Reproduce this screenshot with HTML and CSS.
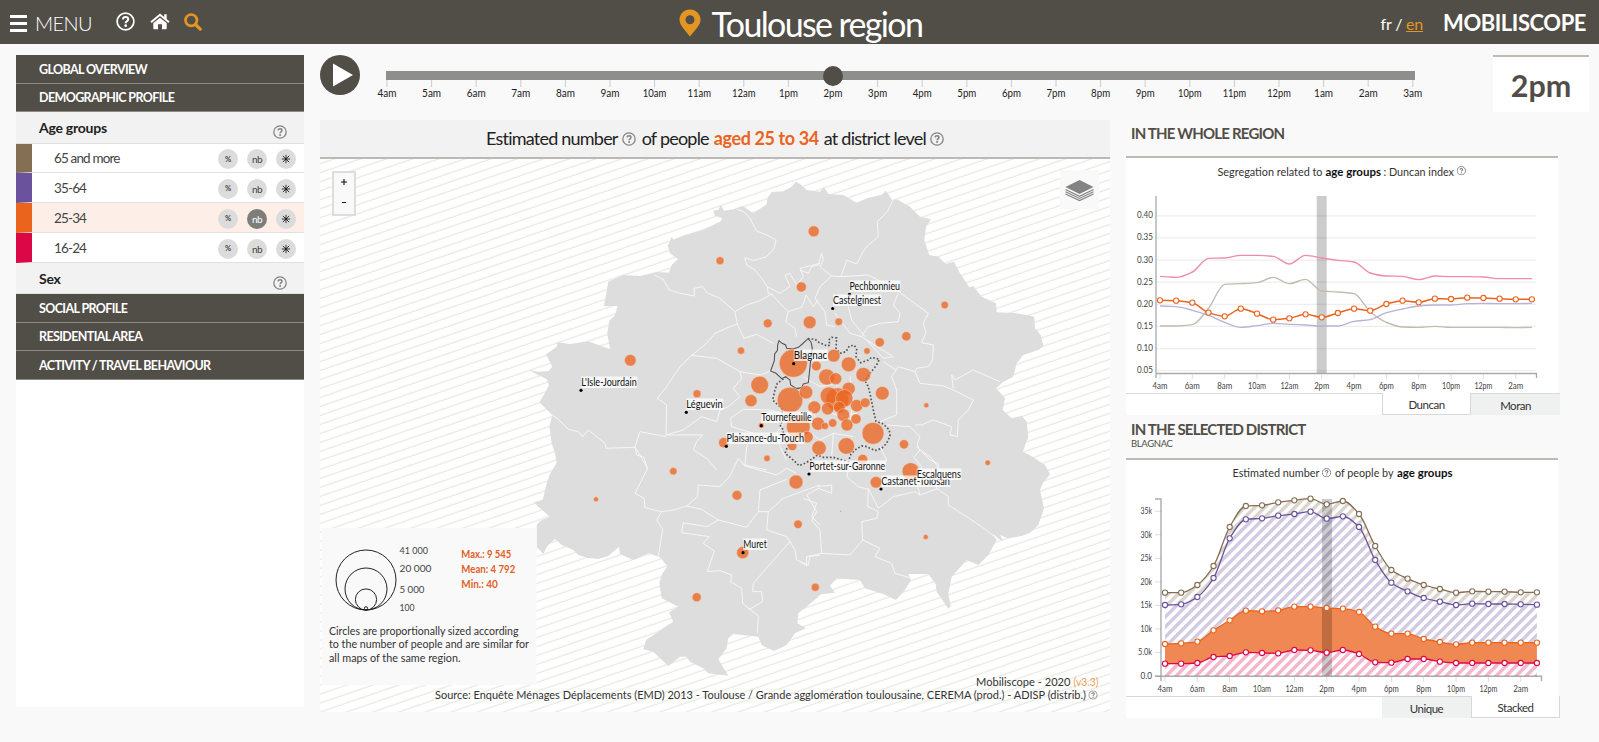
FILE: index.html
```html
<!DOCTYPE html>
<html lang="en">
<head>
<meta charset="utf-8">
<title>Mobiliscope - Toulouse region</title>
<link rel="stylesheet" href="styles.css">
</head>
<body>
<svg class="defs" width="0" height="0" aria-hidden="true">
  <symbol id="help" viewBox="0 0 24 24"><circle cx="12" cy="12" r="10.6" fill="none" stroke="currentColor" stroke-width="2.2"/><path d="M8.7 9.3c.2-2 1.600-3 3.400-3 2 0 3.300 1.200 3.300 2.900 0 2.500-3.200 2.500-3.200 5" fill="none" stroke="currentColor" stroke-width="2.700"/><circle cx="12.200" cy="17.300" r="1.700" fill="currentColor"/></symbol>
  <symbol id="star" viewBox="0 0 12 12"><path d="M6 1v10M1 6h10M2.200 2.200l7.600 7.600M9.800 2.200L2.200 9.800" stroke="currentColor" stroke-width="1"/></symbol>
</svg>

<header class="topbar">
  <div class="top-left">
    <span class="burger"><i></i><i></i><i></i></span>
    <span class="menu">MENU</span>
    <svg class="ic-help"><use href="#help"/></svg>
    <svg class="ic-home" viewBox="0 0 20 17"><path d="M10 4.700L3.300 10v5.500q0 .8.800.8H8v-5h4v5h3.900q.8 0 .8-.8V10z" fill="#fff"/><path d="M1 9.200L10 1.800l9 7.400" fill="none" stroke="#fff" stroke-width="2"/><path d="M14.200 1.300h2.500v5l-2.500-2z" fill="#fff"/></svg>
    <svg class="ic-search" viewBox="0 0 18 18"><circle cx="7.200" cy="7.200" r="5.700" fill="none" stroke="#e39624" stroke-width="2.700"/><path d="M11.500 11.500l4.700 4.700" stroke="#e39624" stroke-width="3.200" stroke-linecap="round"/></svg>
  </div>
  <h1 class="city"><svg class="ic-pin" viewBox="0 0 22 28"><path d="M11 .500C5 .500.500 5 .500 10.700.500 16 5.500 20.500 11 27.500 16.500 20.500 21.500 16 21.500 10.700 21.500 5 17 .500 11 .500zm0 5.700a4.500 4.500 0 1 1 0 9 4.500 4.500 0 0 1 0-9z" fill="#e39624" fill-rule="evenodd"/></svg><span>Toulouse region</span></h1>
  <div class="top-right"><span class="lang">fr / <a>en</a></span><span class="brand">MOBILISCOPE</span></div>
</header>

<main class="page">
  <nav class="sidebar">
    <div class="sec h29">GLOBAL OVERVIEW</div>
    <div class="sec h28">DEMOGRAPHIC PROFILE</div>
    <div class="group">Age groups<svg><use href="#help"/></svg></div>
    <div class="opt o1"><span class="name">65 and more</span><span class="b">%</span><span class="b nb">nb</span><span class="b"><svg><use href="#star"/></svg></span></div>
    <div class="opt o2"><span class="name">35-64</span><span class="b">%</span><span class="b nb">nb</span><span class="b"><svg><use href="#star"/></svg></span></div>
    <div class="opt o3"><span class="name">25-34</span><span class="b">%</span><span class="b nb on">nb</span><span class="b"><svg><use href="#star"/></svg></span></div>
    <div class="opt o4"><span class="name">16-24</span><span class="b">%</span><span class="b nb">nb</span><span class="b"><svg><use href="#star"/></svg></span></div>
    <div class="group sex">Sex<svg><use href="#help"/></svg></div>
    <div class="sec h29">SOCIAL PROFILE</div>
    <div class="sec h28">RESIDENTIAL AREA</div>
    <div class="sec h29">ACTIVITY / TRAVEL BEHAVIOUR</div>
  </nav>

  <div class="content">
    <div class="timebar">
      <svg class="play" viewBox="0 0 40 40"><circle cx="20" cy="20" r="20" fill="#514e47"/><path d="M13 8.500L33 20 13 31.500z" fill="#fff"/></svg>
      <svg class="slider" id="slider" width="1060" height="60" viewBox="370 55 1060 60"></svg>
      <div class="clock">2pm</div>
    </div>
    <div class="cols">
      <section class="mapcol">
        <h2 class="maptitle"><span class="t1">Estimated number</span><svg><use href="#help"/></svg><span class="t2">of people</span><b>aged 25 to 34</b><span class="t3">at district level</span><svg><use href="#help"/></svg></h2>
        <svg class="map" id="map" width="790" height="553" viewBox="320 159 790 553"></svg>
      </section>
      <aside class="side">
        <h3 class="head first">IN THE WHOLE REGION</h3>
        <div class="card">
          <svg id="duncan" width="432" height="235" viewBox="1126 158 432 235"></svg>
          <div class="tabs"><span class="tab active">Duncan</span><span class="tab">Moran</span></div>
        </div>
        <h3 class="head second">IN THE SELECTED DISTRICT<small>BLAGNAC</small></h3>
        <div class="card">
          <svg id="stack" width="432" height="236" viewBox="1126 460 432 236"></svg>
          <div class="tabs low"><span class="tab">Unique</span><span class="tab active">Stacked</span></div>
        </div>
      </aside>
    </div>
  </div>
</main>
<script src="charts.js"></script>
</body>
</html>
```
FILE: styles.css
```css
* { box-sizing: border-box; }
body { margin: 0; height: 742px; overflow: hidden; background: #f9f9f9; font-family: Lato, "Open Sans", sans-serif; font-weight: 400; color: #222; }
.defs { position: absolute; }
svg { display: block; flex: none; }
h1, h2, h3 { margin: 0; font-weight: 400; }

.topbar { height: 44px; background: #514e47; color: #fff; display: grid; grid-template-columns: 1fr auto 1fr; }
.top-left { display: flex; align-items: flex-start; padding-left: 10px; }
.burger { width: 17px; padding-top: 15px; display: grid; gap: 4px; }
.burger i { height: 3px; background: #fff; }
.menu { width: 60px; margin-left: 8px; font-size: 20px; line-height: 24px; padding-top: 11px; font-weight: 300; letter-spacing: -.6px; }
.ic-help { width: 19px; height: 19px; margin: 12px 0 0 21px; }
.ic-home { width: 20px; height: 17px; margin: 13px 0 0 15px; }
.ic-search { width: 18px; height: 18px; margin: 13px 0 0 14px; }
.city { display: flex; align-items: flex-start; font-size: 34px; line-height: 40px; }
.city span { padding-top: 4px; width: 209px; white-space: nowrap; letter-spacing: -1.65px; }
.ic-pin { width: 22px; height: 28px; margin: 9px 11px 0 0; }
.top-right { display: flex; justify-content: flex-end; padding-right: 13px; }
.lang { font-size: 16px; line-height: 20px; padding-top: 14px; margin-right: 20px; letter-spacing: -.2px; }
.lang a { color: #e39624; text-decoration: underline; }
.brand { font-size: 22px; font-weight: 700; line-height: 26px; padding-top: 10px; letter-spacing: -.45px; }

.page { display: flex; gap: 16px; padding: 11px 0 0 16px; }
.sidebar { width: 288px; height: 652px; background: #fff; }
.sec { background: #514e47; color: #fff; font-size: 12.500px; font-weight: 700; letter-spacing: -.62px; padding-left: 23px; line-height: 27px; border-bottom: 1px solid #8b8b8a; }
.h29 { height: 29px; line-height: 29px; }
.h28 { height: 28px; }
.group { height: 32px; background: #f2f2f2; border-bottom: 1px solid #e0e0e0; display: flex; justify-content: space-between; font-size: 14px; font-weight: 700; line-height: 32px; padding: 0 17px 0 23px; letter-spacing: -.25px; }
.group svg { width: 14px; height: 14px; margin-top: 13px; color: #848484; }
.group.sex { height: 31px; }
.opt { height: 30px; display: flex; align-items: center; gap: 9px; padding-right: 8px; background: #fff; border-bottom: 1px solid #e0e0e0; border-left: 16px solid #846e54; font-size: 13.500px; }
.opt.o1 { height: 29px; }
.opt.o2 { border-left-color: #6a539c; }
.opt.o3 { border-left-color: #ea641e; background: #fdeee8; }
.opt.o4 { border-left-color: #dc0747; }
.name { flex: 1; padding-left: 22px; letter-spacing: -.85px; color: #444; }
.b { width: 20px; height: 20px; border-radius: 50%; background: #dcdcdc; display: flex; align-items: center; justify-content: center; font-size: 7.500px; font-weight: 700; color: #444; margin-top: 2px; }
.b.nb { font-size: 10px; font-weight: 400; letter-spacing: -.6px; }
.b.on { background: #7d7d7b; color: #fff; }
.b svg { width: 10px; height: 10px; color: #111; }

.content { width: 1279px; }
.timebar { height: 65px; display: flex; }
.play { width: 40px; height: 40px; }
.slider { margin: 0 63px 0 10px; }
.clock { width: 96px; height: 57px; background: #fff; border-top: 2px solid #c0bab5; color: #514e47; font-size: 30.500px; font-weight: 700; text-align: center; line-height: 57px; }
.cols { display: flex; gap: 16px; }
.mapcol { width: 790px; }
.maptitle { height: 39px; background: #f2f2f2; border-bottom: 2px solid #bdb8b3; display: flex; justify-content: center; font-size: 18px; line-height: 37px; white-space: nowrap; letter-spacing: -.78px; }
.maptitle svg { width: 14px; height: 14px; margin: 12px 0 0 4px; color: #848484; }
.maptitle .t2 { margin-left: 6px; }
.maptitle b { color: #ea641e; font-weight: 700; margin: 0 5px; letter-spacing: -.4px; }
.map { background: #fff; overflow: visible; }
.side { width: 434px; }
.head { color: #514e47; font-size: 15px; font-weight: 700; letter-spacing: -.8px; padding-left: 5px; white-space: nowrap; }
.head.first { height: 36px; line-height: 27px; }
.head.second { height: 43px; line-height: 28px; }
.head small { display: block; font-size: 9.500px; font-weight: 400; line-height: 10px; margin-top: -4px; letter-spacing: -.35px; }
.card { width: 432px; background: #fff; border-top: 2px solid #c0bab5; }
.tabs { height: 22px; width: 434px; display: flex; justify-content: flex-end; border-top: 1px solid #d8d8d8; background: linear-gradient(90deg, #fff 432px, transparent 432px); }
.tab { width: 89px; height: 21px; background: #eff1f1; font-size: 11.500px; line-height: 24px; text-align: center; color: #333; letter-spacing: -.5px; }
.tab.active { background: #fff; border: 1px solid #d8d8d8; border-top: 0; margin-top: -1px; height: 22px; }

svg text { font-family: Lato, sans-serif; }
.tick { font-size: 10.500px; fill: #222; text-anchor: middle; }
.axt { font-size: 8.500px; fill: #444; }
.mid { text-anchor: middle; }
.end { text-anchor: end; }
.ctitle { font-size: 11.500px; fill: #333; }
.strong { font-weight: 700; fill: #111; }
.lab { font-size: 10.500px; fill: #111; }
.bub { fill: #ea641e; fill-opacity: .77; stroke: #f5d5c5; stroke-width: .5; }
.bound { fill: none; stroke: #f6f6f6; stroke-width: 3; stroke-linejoin: round; }
.note { font-size: 11.500px; fill: #333; }
.leg { font-size: 9.500px; fill: #444; }
.stat { font-size: 12px; font-weight: 700; fill: #e2601f; }
```
FILE: charts.js
```js
const el = id => document.getElementById(id);
const txt = (x, y, s, w, cls) => `<text x="${x}" y="${y}" class="${cls}"${w ? ` textLength="${w}" lengthAdjust="spacingAndGlyphs"` : ''}>${s}</text>`;
const help = (cx, cy, s) => `<svg x="${cx - s / 2}" y="${cy - s / 2}" width="${s}" height="${s}" color="#777"><use href="#help"/></svg>`;
const hours = ['4am','5am','6am','7am','8am','9am','10am','11am','12am','1pm','2pm','3pm','4pm','5pm','6pm','7pm','8pm','9pm','10pm','11pm','12pm','1am','2am','3am'];

/* time slider */
let s = '<rect x="386" y="71" width="1029" height="9" fill="#8e8e8c"/>';
hours.forEach((h, i) => {
  const x = 387 + i * 44.6;
  s += `<path d="M${x.toFixed(1)} 80v7" stroke="#ccc"/>` + txt(x.toFixed(1), 97, h, h.length > 3 ? 23.5 : 19, 'tick');
});
s += '<circle cx="833" cy="76" r="10" fill="#514e47"/>';
el('slider').innerHTML = s;

/* smooth line through points, flat at local extrema */
function curve(p) {
  const n = p.length, m = [];
  const d = i => (p[i + 1][1] - p[i][1]) / (p[i + 1][0] - p[i][0]);
  for (let i = 0; i < n; i++) {
    if (i === 0) m.push(0);
    else if (i === n - 1) m.push(0);
    else { const a = d(i - 1), b = d(i); m.push(a * b <= 0 ? 0 : 2 * a * b / (a + b)); }
  }
  let out = `${p[0][0]} ${p[0][1]}`;
  for (let i = 0; i < n - 1; i++) {
    const h = (p[i + 1][0] - p[i][0]) / 3;
    out += `C${(p[i][0] + h).toFixed(2)} ${(p[i][1] + m[i] * h).toFixed(2)} ${(p[i + 1][0] - h).toFixed(2)} ${(p[i + 1][1] - m[i + 1] * h).toFixed(2)} ${p[i + 1][0]} ${p[i + 1][1]}`;
  }
  return out;
}
const pts = (x0, y0, a) => a.map((v, i) => [+(x0 + i * 16.17).toFixed(2), +(y0 + v / 3).toFixed(2)]);
const dots = (p, c) => p.map(q => `<circle cx="${q[0]}" cy="${q[1]}" r="2.6" fill="#fff" stroke="${c}" stroke-width="1.1"/>`).join('');
const xlabels = (x0, y, ty) => hours.filter((h, i) => i % 2 === 0).map((h, i) => {
  const x = (x0 + i * 32.34).toFixed(1);
  return `<path d="M${x} ${ty}v5" stroke="#ddd"/>` + txt(x, y, h, h.length > 3 ? 18 : 15, 'axt mid');
}).join('');

/* segregation chart */
let c = txt(1217.5, 175.5, 'Segregation related to', 105, 'ctitle') + txt(1325.5, 175.5, 'age groups', 55.500, 'ctitle strong') + txt(1383.5, 175.5, ': Duncan index', 70.500, 'ctitle') + help(1461.300, 170.700, 9.5);
['0.40','0.35','0.30','0.25','0.20','0.15','0.10','0.05'].forEach((v, i) => {
  const y = (215.800 + i * 22.130).toFixed(1);
  c += `<path d="M1156 ${y}H1536" stroke="#eee" stroke-width="1.300"/>` + txt(1153, +y + 2.500, v, 16, 'axt end');
});
c += '<path d="M1156 196V378M1155.500 373.500H1536.500V378" fill="none" stroke="#aaa" stroke-width="1.300"/>' + xlabels(1160, 388.500, 374);
c += '<rect x="1316.700" y="196" width="10" height="177" fill="#000" fill-opacity=".2"/>';
[['#f08bae', [499,502,486,445,444,436,436,439,462,436,444,451,456,489,498,499,509,498,500,500,501,506,506,506]],
 ['#c3bbae', [648,648,644,595,523,521,518,502,521,508,543,546,551,605,637,651,652,649,652,652,652,652,653,652]],
 ['#bbb2d8', [588,590,601,616,637,652,647,640,643,645,648,648,634,629,608,597,588,585,585,581,580,581,581,580]]
].forEach(r => { c += `<path d="M${curve(pts(1160, 110, r[1]))}" fill="none" stroke="${r[0]}" stroke-width="1.400"/>`; });
const main = pts(1160, 110, [571,572,578,608,619,596,611,629,625,613,622,609,596,602,582,572,577,566,567,563,564,566,568,568]);
c += `<path d="M${curve(main)}" fill="none" stroke="#ea641e" stroke-width="1.500"/>` + dots(main, '#ea641e');
el('duncan').innerHTML = c;

/* stacked chart */
const hatch = (id, col) => `<pattern id="${id}" width="7.07" height="7.07" patternUnits="userSpaceOnUse" patternTransform="rotate(45)"><rect width="3.4" height="7.07" fill="${col}"/></pattern>`;
let k = '<defs>' + hatch('hp', '#d1cae2') + hatch('hb', '#dad4cd') + hatch('hr', '#f5b5ca') + '</defs>';
k += txt(1232.500, 477, 'Estimated number', 87, 'ctitle') + help(1326.500, 472.700, 9.5) + txt(1335, 477, 'of people by', 58.500, 'ctitle') + txt(1397, 477, 'age groups', 55.500, 'ctitle strong');
['0.0','5.0k','10k','15k','20k','25k','30k','35k'].forEach((v, i) => {
  const y = 676 - i * 23.530;
  k += `<path d="M1155 ${y.toFixed(1)}h6" stroke="#ddd"/>` + txt(1152, (y + 2.700).toFixed(1), v, v.length > 3 ? 14 : 11.500, 'axt end');
});
const top4 = pts(1165, 410, [548,548,525,468,351,288,286,277,271,266,283,273,312,408,480,506,525,537,548,544,545,545,547,547]);
const top3 = pts(1165, 410, [585,583,561,504,385,328,325,317,312,305,326,319,351,450,518,544,564,575,585,581,582,582,583,584]);
const top2 = pts(1165, 410, [702,700,695,661,631,602,604,601,590,590,594,596,606,650,671,671,687,696,703,698,698,698,698,698]);
const top1 = pts(1165, 410, [761,761,759,741,738,727,729,730,720,721,728,720,732,757,758,747,747,755,759,759,759,759,759,759]);
const base = pts(1165, 410, Array(24).fill(798));
const area = (a, b, f, o) => `<path d="M${curve(a)}L${curve([...b].reverse())}Z" fill="${f}" fill-opacity="${o || 1}"/>`;
k += area(top4, top3, 'url(#hb)') + area(top3, top2, 'url(#hp)') + area(top2, top1, '#ea641e', .77) + area(top1, base, 'url(#hr)');
k += '<rect x="1322" y="499" width="10" height="177" fill="#000" fill-opacity=".2"/>';
[[top4, '#846e54'], [top3, '#6a539c'], [top2, '#ea641e'], [top1, '#dc0747']].forEach(r => { k += `<path d="M${curve(r[0])}" fill="none" stroke="${r[1]}" stroke-width="1.300"/>` + dots(r[0], r[1]); });
k += '<path d="M1155 499H1161V681M1155 676.300H1541.500V681" fill="none" stroke="#888" stroke-opacity=".7" stroke-width="1.400"/>' + xlabels(1165, 691.500, 677);
el('stack').innerHTML = k;

/* map */
const region = '795.7,181.7 791.7,186.7 783.3,191.3 771.7,192 767.3,198.3 766.7,204.3 760.7,208.3 753.3,213.3 742.7,206 733.3,209.3 724,210.7 720.7,205 718.3,210 713.3,210.7 715,215.7 722.3,218.3 720,222 716.7,223.3 703.3,230 685,235 673.3,240 671.7,236.7 667.7,246 670,253.3 678,259 671.7,265 669,272.7 656.7,272 640,276 623.3,275 608.3,281.7 604,306 617.7,306 615,315 609.3,320.7 607.3,333.3 610,349 598.3,345 588.3,341.3 570,344 557.3,342.3 556.7,346.7 546,354.3 552.3,366.7 548.3,371 538.3,371.7 528.3,370 546.7,379.3 549,385 545,393 539.3,402.3 552.3,415 549.3,426.7 551.7,443.3 555,453.3 556.7,463 550,474 546.7,483.3 542.7,500 534,502.3 540,508.3 550,516.7 540,521 536.7,525 536.7,546.7 543.3,554 547.3,546 555,539 561.7,545 573.3,550 578.3,555 588,558 598.3,559 608.3,556 619,546.7 620,554 633.3,560 648.3,553.3 660,557.3 667.3,566 661.7,575 659.3,583.3 661.7,598.3 678.3,606.7 669,612.3 673.3,621.7 666.7,625.7 655,634 646,640 643.3,649.3 653.3,651.7 668.3,666 680,656.7 686.7,656.7 690,661.7 703.3,668.3 708.3,673.3 728.3,675.7 718.3,659.3 726.7,648.3 728.3,638.3 733.3,634 758.3,636.7 761.7,645 774,651 786.7,645 795,633.3 806,628.3 797.3,623.3 798.3,613.3 803.3,609.3 816.7,598.3 820.7,594.3 835,592.7 830,585.7 836.7,578.3 860,580 865,588.3 883.3,594 896,600 905,590 911,580 908.3,574 928.3,574 935.7,584 936.7,591.7 948.3,608.7 950.7,606 948.3,593.3 951.7,576.7 966.7,560 978.3,565 988.3,555 996.7,540 992,533 1000,540 1002.7,540 1000,535 1008.3,538.3 1021.7,536 1030,532.7 1038.3,525 1044,508.3 1040,490 1042.7,483.3 1050,474.3 1045,465 1028.3,454.3 1022.7,451.7 1028.3,436.7 1026.7,421.7 1021.7,416 1011.7,418.3 1002.7,410 1005,398.3 996,388.3 1003.3,381.7 1013.3,376.7 1016.7,363.3 1023.3,355 1038.3,350 1043.3,346 1040.7,335 1035,328.3 1034.3,316.7 1016.7,313.3 996.7,312.3 996,303.3 981.7,296.7 973.3,286 969.3,287.3 960,273.3 954,261.7 945.7,264 938.3,256.7 929.3,255 924.3,240 926,226.7 931,219.3 920,216.7 910,206.7 896.7,199.3 892.7,200.7 886,190.7 881.7,195 868.3,197.7 856.7,202.7 843.3,195 828.3,194 824,187.3 820,191.7 806.7,190 800,184';
const bounds = [
  [520, 170, 'M650 118L672 125 690 145 710 183 740 195 768 210 762 235 740 260 700 272 675 263 680 285 705 300 725 325 742 350 745 370 755 372 720 392 680 405 645 425 600 385 560 368 548 350 522 355 523 378 480 370 448 360 430 328 403 315M645 425L652 462 630 470 585 490 560 520 515 556 480 590 440 650 412 685 440 705 438 795M438 795L548 795 530 815 520 840 560 865 590 900M515 556L590 565 660 605 720 615 760 600M755 372L780 400 805 425 845 412 852 395 858 375 880 410 895 390M742 350L780 370 810 350 795 315 810 310 830 345 850 320 840 295 900 280M805 425L797 455 825 475 830 500M652 462L672 505 710 493 760 520M97 735L115 748 145 778 175 785 188 800 205 780 255 820 258 835 345 832 360 785 438 800M345 832L350 855 372 862 383 900M438 795L490 780 545 740 590 755 600 720 625 710 660 680 640 655 665 625 660 605M670 718L750 720 790 735M670 718L632 745 635 770 700 790 680 830 675 885 740 900M790 760L770 790 780 830 800 870'],
  [520, 440, 'M345 20L383 85 345 160 372 175 375 203 425 215 460 210 500 198 533 170 535 135 600 140 630 108 655 55 675 78 770 105 800 85 830 100M500 198L545 208 595 240 560 260 490 248 485 278 568 290 550 310 583 333 562 395 600 392 635 405 632 425 665 445 668 490 715 528 712 580M425 215L410 240 428 268 415 350M595 240L680 262 715 215 720 150 800 118M715 215L745 215 740 270 800 290 810 305 770 350 700 430 698 455 725 455 728 485 685 510M810 305L825 330 830 360 865 375 870 350 900 345M745 215L790 175 900 135M850 175L890 190 875 230 900 255'],
  [800, 170, 'M278 92L262 125 232 155 235 200 195 235 170 282 140 270 123 320 95 318 60 350 45 385 75 425 80 465 105 470M0 300L25 310 35 290 55 285 65 250 70 270 60 290 95 318M123 320L205 315 225 325 290 360 330 390 385 430 370 460 378 488 365 518 400 525 398 570 385 590 350 595 345 605M295 370L280 405 300 430 295 455 240 460 205 470 185 500 150 490 105 430M185 500L230 530 280 560 250 565 200 510M250 575L288 600 295 590 345 605 360 640 430 648 460 660 520 690 505 720 475 750 472 800 450 795 455 770 400 750 365 765 345 765M288 600L275 620 290 660 290 735 240 755M455 615L465 630 520 600 600 635M455 615L460 655M260 765L330 770 360 800 352 820 355 835 395 865 420 900M145 410L155 450 195 500M10 620L60 650 110 640M0 740L50 710 120 740 170 730M20 780L60 810 100 790 160 800M100 790L95 860M30 690L50 760M110 640L115 740M150 620L160 700 145 780M240 830L260 870 240 900'],
  [800, 440, 'M350 20L360 30 342 52 365 80 350 130 360 165M365 35L390 60 415 70 410 145 445 170 445 195 500 230 545 260 590 295M205 145L235 205 280 170 345 155 360 165 415 145M150 70L140 110 175 140 205 148 203 200 235 215 230 235 185 245 188 300 240 325 225 350 275 370 285 400 335 415M188 300L150 345 65 340 60 270 35 240 50 215 20 165 55 145 95 160 95 135 55 140M65 340L20 350 20 378 0 365'],
];
const bubbles = [[793.3,363.3,14],[790,400,12.8],[798.3,426.7,11.8],[837.3,399.3,11.5],[873,433.3,10.9],[813.7,231.3,5.5],[720,260.7,4],[801.3,287,5],[767.7,323.3,4.4],[741,350.7,3.6],[630.3,360.3,5.8],[697,393.7,4],[809.7,322.3,6.4],[759.7,385,8.8],[751,400.7,6.1],[761.3,425.5,2.8],[723.7,442.7,5.1],[792.3,446,4.6],[807.3,437,5.8],[767,458.3,3.2],[838.7,321.7,3.8],[944.7,305,3.7],[906.3,336.3,4.6],[879.7,342.3,4.6],[867,351,3.2],[833.7,355.7,6.4],[848.7,364.3,7.4],[816.3,366,4.8],[863.3,374.7,7.3],[826.7,377,8],[835.7,378.7,6],[848.7,388.7,6.5],[882.3,393.3,6.8],[806,392.3,6.7],[829,395.7,8.8],[844.3,398.3,8.7],[814.3,407.3,6.4],[827.7,408.7,6.2],[839.3,407.3,5.8],[856.7,405.7,6.2],[865.3,402.7,4.8],[843.3,415,6.3],[856,419,5.1],[847,425,6],[818,423.7,6.5],[825,426,3.5],[832.7,423,4.2],[846.3,446,8.2],[819,448,7.2],[904,444.3,4.6],[926.3,405.3,2.5],[987.7,462.7,2.7],[862.7,459.3,4.9],[910.7,471.3,8.6],[876,482.3,5.8],[925.7,537,2.5],[815.3,587.3,4],[840.7,511.3,.8],[796,482,7],[737,495.3,4.9],[673.3,471.3,3.7],[596,499.3,2.5],[798,524.3,4.2],[742.7,552.7,6.1],[696.7,597.3,4.5]];
const towns = [["L'Isle-Jourdain",581.3,386,56,581,390.3],['Léguevin',686.3,408,37,686.3,412.3],['Tournefeuille',761.3,421,51,761.3,425.7],['Plaisance-du-Touch',726.5,442,78,726.3,446.3],['Pechbonnieu',849.5,290,51,849.5,294.3],['Castelginest',833,304,48.5,832.7,308.5],['Blagnac',793.8,359,34,793.7,363.7],['Portet-sur-Garonne',809.3,470,76.5,809,474],['Castanet-Tolosan',881.3,485,69,881,489],['Escalquens',916.7,478,44.7],['Muret',743.3,548,24,743,552.7]];

let m = '<defs><pattern id="hatch" width="20" height="8.5" patternUnits="userSpaceOnUse" patternTransform="rotate(-19)"><path d="M0 4H20" stroke="#e3e2d8" stroke-width="1"/></pattern></defs><rect x="320" y="159" width="790" height="553" fill="url(#hatch)"/>';
m += `<polygon points="${region}" fill="#ddd"/>`;
bounds.forEach(b => { m += `<path class="bound" transform="translate(${b[0]} ${b[1]}) scale(.3333)" d="${b[2]}"/>`; });
m += '<g transform="translate(740 320) scale(.3333)" fill="none" stroke="#555"><path stroke-width="5" stroke-dasharray="5 6" d="M204 56L225 58 238 68 262 78 270 75 266 60 275 52 290 54 288 85 300 100 318 95 328 78 343 76 350 88 348 110 362 128 385 120 395 112 418 118 410 135 390 160 375 182 385 200 392 230 402 280 408 304 430 312 448 330 450 348 440 370 425 385 405 392 380 380 365 378 345 390 333 402 325 425 300 418 280 412 250 412 232 405 215 418 195 430 177 437 165 425 148 410 135 400 145 375 130 350 130 330 120 315 130 300 125 265 98 240 105 210 112 190 137 172"/><path stroke-width="3.300" d="M117 62L126 70 137 75 140 85 158 87 175 82 187 72 204 56 213 66 217 85 214 110 211 130 208 160 205 188 190 192 185 203 170 206 152 195 150 180 137 170 125 176 108 160 92 153 103 122 104 102 112 92 113 75Z"/></g>';
bubbles.forEach(b => { m += `<circle class="bub" cx="${b[0]}" cy="${b[1]}" r="${b[2]}"/>`; });
towns.forEach(t => {
  m += `<rect x="${t[1]}" y="${t[2] - 9.500}" width="${t[3]}" height="11.500" fill="#fff" fill-opacity=".75"/>` + txt(t[1], t[2], t[0], t[3] - .5, 'lab');
  if (t[4]) m += `<circle cx="${t[4]}" cy="${t[5]}" r="1.600"/>`;
});
/* zoom buttons and layer switch */
m += '<rect x="333" y="172" width="22" height="43" fill="#f9f9f9" stroke="#ddd" stroke-width="2"/><path d="M341 182h6M344 179v6M342 202.500h4" stroke="#111" stroke-width="1.100"/>';
m += '<rect x="1060" y="170" width="39" height="39" fill="#f9f9f9"/><path d="M1079.500 180l14 7-14 7-14-7z" fill="#838383"/><path d="M1065.500 189.500l14 6.800 14-6.800M1065.500 191.700l14 6.800 14-6.800M1065.500 194l14 6.600 14-6.600" fill="none" stroke="#838383" stroke-width="1.100"/>';
/* size legend */
m += '<rect x="322" y="528" width="214.500" height="157" fill="#f9f9f9"/><g fill="none" stroke="#222" stroke-width="1"><circle cx="366" cy="580" r="30"/><circle cx="366" cy="589" r="21"/><circle cx="366" cy="599.500" r="10.600"/><circle cx="366" cy="608.300" r="1.600"/></g>';
[['41 000',554,28.500],['20 000',572,32],['5 000',593,25],['100',611,15]].forEach(r => { m += txt(399.500, r[1], r[0], r[2], 'leg'); });
[['Max.: 9 545',558,50],['Mean: 4 792',573,54],['Min.: 40',588,36.500]].forEach(r => { m += txt(461.300, r[1], r[0], r[2], 'stat'); });
[['Circles are proportionally sized according',635,189.500],['to the number of people and are similar for',648,200],['all maps of the same region.',662,131.500]].forEach(r => { m += txt(329, r[1], r[0], r[2], 'note'); });
m += txt(976, 686, 'Mobiliscope - 2020', 94.500, 'note') + '<text x="1073.500" y="686" class="note" style="fill:#e8a255" textLength="25" lengthAdjust="spacingAndGlyphs">(v3.3)</text>';
m += txt(435, 699, 'Source: Enquête Ménages Déplacements (EMD) 2013 - Toulouse / Grande agglomération toulousaine, CEREMA (prod.) - ADISP (distrib.)', 651, 'note') + help(1093, 695, 9.5);
el('map').innerHTML = m;
```
